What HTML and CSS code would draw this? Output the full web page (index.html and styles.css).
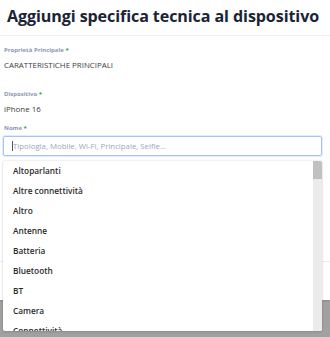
FILE: index.html
```html
<!DOCTYPE html>
<html lang="it">
<head>
<meta charset="utf-8">
<title>Aggiungi specifica tecnica</title>
<link rel="stylesheet" href="styles.css">
</head>
<body>
<div class="backdrop">
  <div class="modal">
    <div class="modal-header">
      <h1 class="title">Aggiungi specifica tecnica al dispositivo</h1>
    </div>
    <div class="modal-body">
      <div class="field field-first">
        <div class="label">Proprietà Principale <span class="req">*</span></div>
        <div class="value">CARATTERISTICHE PRINCIPALI</div>
      </div>
      <div class="field">
        <div class="label">Dispositivo <span class="req">*</span></div>
        <div class="value">iPhone 16</div>
      </div>
      <div class="field combo">
        <div class="label">Nome <span class="req">*</span></div>
        <div class="input"><span class="caret"></span><span class="placeholder">Tipologia, Mobile, Wi-Fi, Principale, Selfie...</span></div>
        <div class="dropdown">
          <ul class="options">
            <li>Altoparlanti</li>
            <li>Altre connettività</li>
            <li>Altro</li>
            <li>Antenne</li>
            <li>Batteria</li>
            <li>Bluetooth</li>
            <li>BT</li>
            <li>Camera</li>
            <li>Connettività</li>
            <li>Display</li>
          </ul>
          <div class="scrollbar"><div class="thumb"></div></div>
        </div>
      </div>
    </div>
    <div class="modal-footer"></div>
  </div>
</div>
</body>
</html>
```
FILE: styles.css
```css
html, body {
  margin: 0;
  padding: 0;
}
body {
  font-family: "Open Sans", "Liberation Sans", sans-serif;
  background: #a1a1a1;
  width: 330px;
  height: 337px;
  overflow: hidden;
}
.backdrop {
  display: flex;
  flex-direction: column;
}
.modal {
  background: #ffffff;
  height: 300px;
  display: flex;
  flex-direction: column;
  box-shadow: 0 1px 2px rgba(0,0,0,0.15);
}
.modal-header {
  height: 36px;
  border-bottom: 1px solid #f1f1f3;
  box-sizing: border-box;
  padding: 4px 0 0 7px;
}
.title {
  margin: 0;
  font-size: 16.1px;
  line-height: 24px;
  font-weight: 700;
  color: #1b2436;
  white-space: nowrap;
  letter-spacing: -0.1px;
}
.modal-body {
  flex: 1;
  padding: 10px 4px 0 4px;
  position: relative;
}
.modal-footer {
  height: 39px;
  border-top: 1px solid #ececec;
  box-sizing: border-box;
}
.field {
  margin-bottom: 9px;
}
.field-first {
  margin-bottom: 19px;
}
.label {
  font-size: 6px;
  line-height: 9px;
  font-weight: 700;
  color: #8c97b3;
  margin-bottom: 5px;
}
.req {
  color: #2ea44f;
}
.value {
  font-size: 7.9px;
  line-height: 11px;
  color: #3b3b3b;
}
.combo {
  position: relative;
}
.combo .label {
  margin-bottom: 3px;
}
.input {
  height: 20px;
  box-sizing: border-box;
  margin-left: -1px;
  width: 319px;
  border: 1.5px solid #a6c3fb;
  border-radius: 2px;
  box-shadow: 0 0 0 1px #e3ecfd;
  display: flex;
  align-items: center;
  padding-left: 8px;
}
.caret {
  width: 1px;
  height: 10px;
  background: #555;
}
.placeholder {
  font-size: 7.8px;
  color: #9ea6b8;
  white-space: nowrap;
}
.dropdown {
  position: absolute;
  left: -1px;
  top: 37px;
  width: 319px;
  height: 170px;
  background: #ffffff;
  border-radius: 2px;
  box-shadow: 0 0 2px rgba(0,0,0,0.18), 0 1px 3px rgba(0,0,0,0.08);
  display: flex;
  overflow: hidden;
  z-index: 5;
}
.options {
  list-style: none;
  margin: 0;
  padding: 0;
  flex: 1;
  overflow: hidden;
}
.options li {
  height: 20px;
  line-height: 20px;
  padding-left: 10px;
  font-size: 8.3px;
  font-weight: 600;
  color: #2b2b2b;
  white-space: nowrap;
}
.scrollbar {
  width: 9px;
  background: #ebebeb;
  flex: none;
}
.thumb {
  height: 18px;
  background: #c1c1c1;
}
```
